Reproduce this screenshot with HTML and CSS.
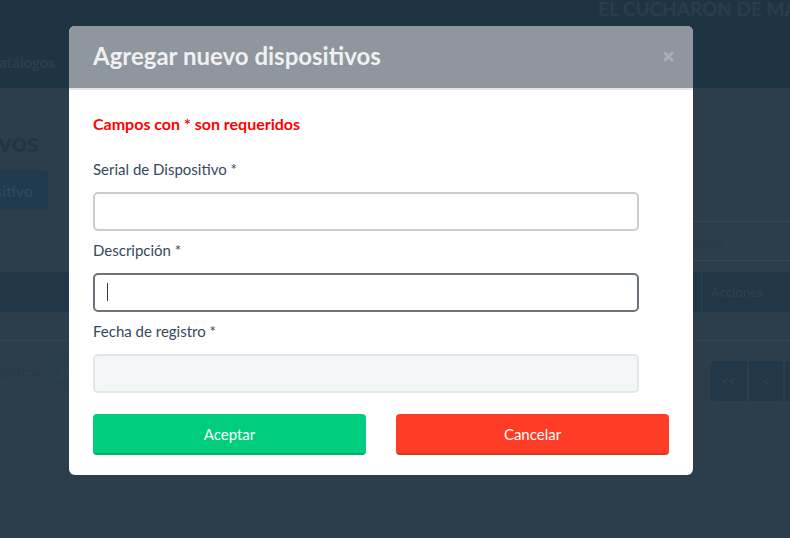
FILE: index.html
```html
<!DOCTYPE html>
<html lang="es">
<head>
<meta charset="utf-8">
<title>Dispositivos</title>
<link rel="stylesheet" href="styles.css">
</head>
<body>
<div class="page">
  <header class="navbar">
    <div class="brand-row"><span class="brand">EL CUCHARON DE MARISCOS</span></div>
    <div class="nav-row"><div class="clip-end nav-clip"><span class="nav-item">Catálogos</span></div></div>
  </header>
  <main class="content">
    <div class="clip-end title-clip"><h1 class="page-title">Dispositivos</h1></div>
    <div class="clip-end btn-clip"><span class="bg-btn">Nuevo dispositivo</span></div>
    <div class="search-row"><div class="search">Buscar</div></div>
    <div class="table-head"><div class="th-spacer"></div><div class="th">Acciones</div></div>
    <div class="table-body"></div>
    <div class="footer-row">
      <div class="len-group">
        <div class="clip-end len-clip"><span class="len-text">Mostrando registros</span></div>
        <div class="len-box">10</div>
      </div>
      <div class="pager">
        <span class="pg first">&lt;&lt;</span>
        <span class="pg prev">&lt;</span>
        <span class="pg num">1</span>
      </div>
    </div>
  </main>
</div>

<div class="modal">
  <div class="modal-header">
    <h2 class="modal-title">Agregar nuevo dispositivos</h2>
    <span class="close" aria-label="Cerrar">
      <svg width="11" height="11" viewBox="0 0 11 11"><path d="M2 2 L9 9 M9 2 L2 9" stroke="#a9afb5" stroke-width="3" stroke-linecap="round"/></svg>
    </span>
  </div>
  <div class="modal-body">
    <p class="required">Campos con * son requeridos</p>
    <div class="form-group">
      <label class="label">Serial de Dispositivo *</label>
      <input class="field" type="text">
    </div>
    <div class="form-group">
      <label class="label">Descripción *</label>
      <div class="field-wrap">
        <input class="field focused" type="text">
        <span class="caret"></span>
      </div>
    </div>
    <div class="form-group">
      <label class="label">Fecha de registro *</label>
      <input class="field disabled" type="text" disabled>
    </div>
    <div class="actions">
      <button class="btn btn-ok">Aceptar</button>
      <button class="btn btn-cancel">Cancelar</button>
    </div>
  </div>
</div>
</body>
</html>
```

FILE: styles.css
```css
* { box-sizing: border-box; }
html, body { margin: 0; padding: 0; }
body {
  width: 790px;
  height: 538px;
  overflow: hidden;
  background: #2c3e4c;
  font-family: Lato, "Open Sans", sans-serif;
  position: relative;
}

/* ---------- dimmed background page ---------- */
.page { width: 790px; height: 538px; overflow: hidden; }

.navbar {
  height: 88px;
  background: #1f3443;
  display: flex;
  flex-direction: column;
}
.brand-row {
  height: 20px;
  padding-left: 598px;
  white-space: nowrap;
  overflow: hidden;
}
.brand {
  font-size: 19px;
  font-weight: 700;
  line-height: 18px;
  color: #2a3d4c;
  display: block;
}
.nav-row {
  margin-top: 32px;
  height: 20px;
  display: flex;
  align-items: center;
}
.clip-end {
  display: flex;
  justify-content: flex-end;
  overflow: hidden;
  white-space: nowrap;
}
.nav-clip { width: 55px; }
.nav-item {
  font-size: 15px;
  font-weight: 700;
  color: #2b3e4d;
  line-height: 20px;
}

.content { display: flex; flex-direction: column; }

.title-clip { width: 39px; margin-top: 38px; height: 32px; align-items: center; }
.page-title {
  margin: 0;
  font-size: 27px;
  font-weight: 700;
  line-height: 32px;
  color: #213545;
}

.btn-clip { width: 48px; margin-top: 12px; height: 40px; }
.bg-btn {
  display: flex;
  align-items: center;
  height: 40px;
  padding: 0 15px 0 20px;
  background: #223a4e;
  border-radius: 4px;
  font-size: 16px;
  color: #2e4a5e;
}

.search-row {
  margin-top: 11px;
  height: 40px;
  display: flex;
  justify-content: flex-end;
}
.search {
  width: 210px;
  height: 40px;
  border: 1px solid #34485a;
  border-right: none;
  padding-left: 100px;
  display: flex;
  align-items: center;
  font-size: 15px;
  color: #263a4a;
}

.table-head {
  margin-top: 11px;
  height: 40px;
  background: #213646;
  display: flex;
}
.th-spacer { width: 701px; }
.th {
  flex: 1;
  border-left: 1px solid #2c4050;
  padding-left: 9px;
  display: flex;
  align-items: center;
  font-size: 13px;
  font-weight: 700;
  color: #2b4051;
}

.table-body {
  height: 29px;
  border-bottom: 1px solid #314554;
}

.footer-row {
  margin-top: 10px;
  display: flex;
  justify-content: space-between;
  align-items: flex-start;
}
.len-group { display: flex; gap: 4px; align-items: center; }
.len-clip { width: 40px; height: 40px; align-items: center; }
.len-text { font-size: 14px; color: #263a49; }
.len-box {
  width: 50px;
  height: 40px;
  background: #2a3d4b;
  border-radius: 3px;
  padding-left: 14px;
  display: flex;
  align-items: center;
  font-size: 14px;
  color: #2f4454;
}
.pager {
  margin-top: 10px;
  display: flex;
  gap: 2px;
  margin-right: -35px;
}
.pg {
  height: 40px;
  background: #223747;
  display: flex;
  align-items: center;
  justify-content: center;
  font-size: 13px;
  font-weight: 700;
  color: #2d4252;
}
.pg.first { width: 37px; border-radius: 5px 0 0 5px; }
.pg.prev { width: 34px; }
.pg.num { width: 40px; }

/* ---------- modal ---------- */
.modal {
  position: absolute;
  left: 69px;
  top: 26px;
  width: 624px;
  background: #fff;
  border-radius: 6px;
  overflow: hidden;
}
.modal-header {
  height: 64px;
  background: #8f969d;
  border-bottom: 2px solid #e4e7ea;
  display: flex;
  align-items: center;
  justify-content: space-between;
  padding: 0 19px 2px 24px;
}
.modal-title {
  margin: 0;
  font-size: 24px;
  font-weight: 700;
  color: #eef0f2;
  line-height: 30px;
}
.close { display: flex; width: 11px; height: 11px; }

.modal-body { padding: 24px 24px 20px; }
.required {
  margin: 0 0 25px;
  font-size: 16px;
  font-weight: 700;
  line-height: 20px;
  color: #ff0000;
}
.form-group { width: 546px; margin-bottom: 9px; }
.label {
  display: block;
  font-size: 15px;
  line-height: 20px;
  color: #34495e;
  margin-bottom: 13px;
}
.field {
  display: block;
  width: 546px;
  height: 39px;
  border: 2px solid #c8cdd1;
  border-radius: 5px;
  background: #fff;
  outline: none;
  font-family: inherit;
  font-size: 14px;
  padding: 0 12px;
}
.field.focused { border-color: #6c747b; }
.field.disabled { background: #f4f7f8; border-color: #e2e7e9; }
.field-wrap { position: relative; }
.caret {
  position: absolute;
  left: 14px;
  top: 10px;
  width: 1px;
  height: 18px;
  background: #2c3e50;
}

.actions {
  margin-top: 21px;
  display: grid;
  grid-template-columns: 273px 273px;
  column-gap: 30px;
}
.btn {
  height: 41px;
  border: none;
  border-radius: 4px;
  font-family: inherit;
  font-size: 15px;
  color: #fff;
  padding: 0;
}
.btn-ok { background: #00ce7c; border-bottom: 2px solid #00b06a; }
.btn-cancel { background: #ff3d26; border-bottom: 2px solid #d6381f; }
```
